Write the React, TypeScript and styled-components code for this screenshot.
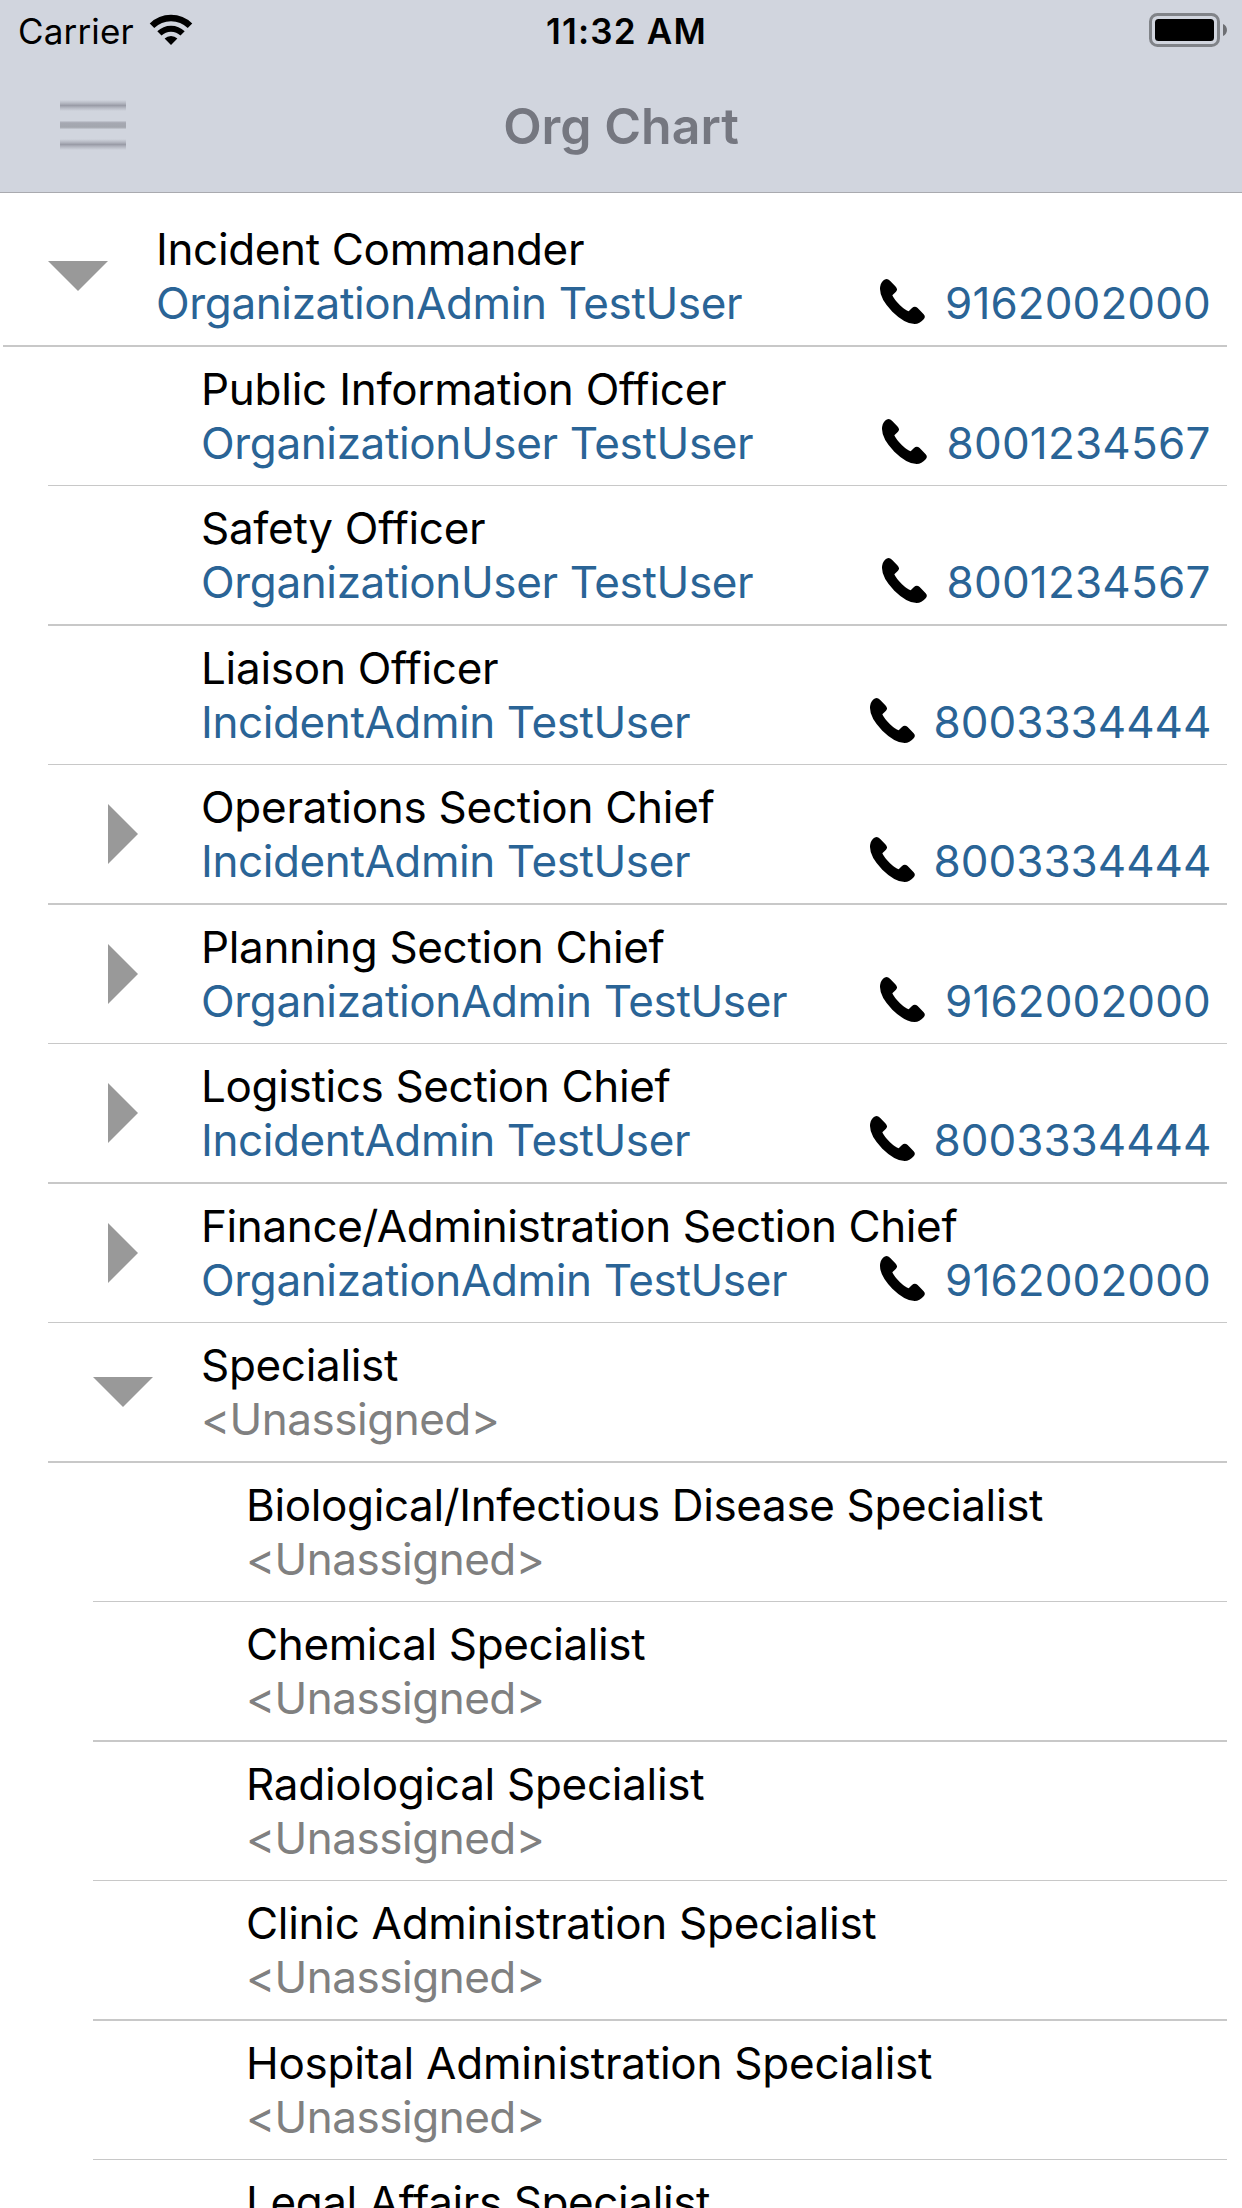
import React from 'react';
import styled, { createGlobalStyle } from 'styled-components';

const GlobalStyle = createGlobalStyle`
  *, *::before, *::after { box-sizing: border-box; }
  html, body { margin: 0; background: #fff; }
  body { overflow: hidden; }
`;

const Screen = styled.div`
  width: 1242px;
  height: 2208px;
  overflow: hidden;
  background: #fff;
  color: #000;
  font-family: Inter, 'Liberation Sans', sans-serif;
`;

const Header = styled.header`
  height: 193px;
  background: #d1d5de;
  border-bottom: 1px solid #a9aaaf;
`;

const StatusBar = styled.div`
  display: grid;
  grid-template-columns: 528px 1fr auto;
  height: 60px;
  padding: 1px 15px 0 18px;
  font-size: 35px;
  line-height: 60px;
  white-space: nowrap;
`;

const Carrier = styled.div`
  display: flex;
  gap: 15px;
  letter-spacing: 0.15px;

  svg { margin-top: 13px; }
`;

const Clock = styled.time`
  font-weight: 600;
  letter-spacing: 1.2px;
`;

const Battery = styled.svg`
  display: block;
  margin-top: 11px;
`;

const NavBar = styled.div`
  display: grid;
  grid-template-columns: 1fr auto 1fr;
  height: 132px;
  padding: 0 60px;
`;

const MenuButton = styled.button`
  display: flex;
  flex-direction: column;
  justify-self: start;
  gap: 9px;
  width: 66px;
  margin: 0;
  padding: 40px 0 0;
  border: 0;
  background: none;
`;

const MenuBar = styled.span<{ $solid?: boolean }>`
  height: 10.5px;
  background: ${(p) =>
    p.$solid
      ? 'linear-gradient(#d1d5de 5%, #a6a8b2 28%, #a3a6ae 72%, #d1d5de 95%)'
      : 'linear-gradient(#d1d5de, #b6b9c3 28%, #9a9ca7 50%, #b6b9c3 72%, #d1d5de)'};
`;

const Title = styled.h1`
  margin: 0;
  color: #757780;
  font-size: 50px;
  font-weight: 600;
  line-height: 132px;
  white-space: nowrap;
`;

const List = styled.ul`
  margin: 0;
  padding: 14px 15px 0 3px;
  list-style: none;
`;

/* Rows are 139.5px on average: every other separator is a pixel thicker. */
const Row = styled.li<{ $level: number }>`
  display: grid;
  grid-template-columns: 60px 1fr;
  column-gap: 48px;
  height: 140px;
  margin-left: ${(p) => p.$level * 45}px;
  padding-left: 45px;
  border-bottom: 2px solid #c8c8c8;

  &:nth-child(even) {
    height: 139px;
    border-bottom-width: 1px;
  }
`;

const Toggle = styled.svg`
  display: block;
  width: 60px;
  height: 60px;
  margin-top: 39px;
  fill: #999;
`;

const Details = styled.div`
  grid-column: 2;
  min-width: 0;
  padding-top: 15px;
  font-size: 44px;
  line-height: 54px;
  white-space: nowrap;
`;

const Position = styled.div<{ $track: number }>`
  letter-spacing: ${(p) => p.$track}px;
`;

const Assignment = styled.div`
  display: flex;
  justify-content: space-between;
`;

const Person = styled.a<{ $track: number }>`
  color: #2a6496;
  letter-spacing: ${(p) => p.$track}px;
`;

const Unassigned = styled.span`
  color: #808080;
  letter-spacing: -0.5px;
`;

const Phone = styled.a<{ $width: number; $gap: number; $track: number }>`
  display: flex;
  flex: none;
  gap: ${(p) => p.$gap}px;
  width: ${(p) => p.$width}px;
  color: #2a6496;
  letter-spacing: ${(p) => p.$track}px;

  svg {
    flex: none;
    margin-top: 3px;
  }
`;

type Contact = { name: string; track: number; phone: string };
type Entry = {
  title: string;
  level: number;
  track: number;
  toggle?: 'open' | 'closed';
  contact?: Contact;
};

const orgAdmin: Contact = { name: 'OrganizationAdmin TestUser', track: -0.36, phone: '9162002000' };
const orgUser: Contact = { name: 'OrganizationUser TestUser', track: -0.36, phone: '8001234567' };
const incidentAdmin: Contact = { name: 'IncidentAdmin TestUser', track: -0.4, phone: '8003334444' };

const phoneLayout: Record<string, { width: number; gap: number; track: number }> = {
  '9162002000': { width: 347.5, gap: 20.5, track: 0.1 },
  '8001234567': { width: 345, gap: 19.5, track: 0.2 },
  '8003334444': { width: 357, gap: 18.5, track: 0 },
};

const entries: Entry[] = [
  { title: 'Incident Commander', level: 0, track: -0.35, toggle: 'open', contact: orgAdmin },
  { title: 'Public Information Officer', level: 1, track: -0.25, contact: orgUser },
  { title: 'Safety Officer', level: 1, track: -0.3, contact: orgUser },
  { title: 'Liaison Officer', level: 1, track: -0.27, contact: incidentAdmin },
  { title: 'Operations Section Chief', level: 1, track: -0.27, toggle: 'closed', contact: incidentAdmin },
  { title: 'Planning Section Chief', level: 1, track: -0.34, toggle: 'closed', contact: orgAdmin },
  { title: 'Logistics Section Chief', level: 1, track: -0.35, toggle: 'closed', contact: incidentAdmin },
  { title: 'Finance/Administration Section Chief', level: 1, track: -0.39, toggle: 'closed', contact: orgAdmin },
  { title: 'Specialist', level: 1, track: -0.32, toggle: 'open' },
  { title: 'Biological/Infectious Disease Specialist', level: 2, track: -0.37 },
  { title: 'Chemical Specialist', level: 2, track: -0.39 },
  { title: 'Radiological Specialist', level: 2, track: -0.29 },
  { title: 'Clinic Administration Specialist', level: 2, track: -0.29 },
  { title: 'Hospital Administration Specialist', level: 2, track: -0.24 },
  { title: 'Legal Affairs Specialist', level: 2, track: -0.4 },
];

const WifiIcon = () => (
  <svg width="44" height="34" viewBox="0 0 44 34">
    <g fill="none" stroke="#000">
      <path d="M3 11.8A27 27 0 0 1 41 11.8" strokeWidth="6.4" />
      <path d="M10.4 19.4A16.6 16.6 0 0 1 33.6 19.4" strokeWidth="6" />
    </g>
    <path d="M22 31L15.6 24.6A9 9 0 0 1 28.4 24.6Z" />
  </svg>
);

const BatteryIcon = () => (
  <Battery width="78" height="36" viewBox="0 0 78 36">
    <rect x="1.5" y="2.5" width="68" height="31" rx="7" fill="none" stroke="#808388" strokeWidth="3" />
    <rect x="6" y="7" width="59" height="22" rx="3.5" />
    <path d="M74 12C79.3 14 79.3 22 74 24Z" fill="#6d6f74" />
  </Battery>
);

const HandsetIcon = () => (
  <svg width="45" height="45" viewBox="0 0 135 135">
    <path
      fill="#000"
      d="M9 5Q20 -5 30 5L46 22Q55 31 48 38L37 49Q42 61 60 79Q76 94 86 97L96 87Q104 79 113 87L131 106Q138 113 131 121Q119 135 104 135Q75 135 37 98Q0 60 0 30Q0 14 9 5Z"
    />
  </svg>
);

const OrgRow = ({ entry }: { entry: Entry }) => {
  const { title, level, track, toggle, contact } = entry;
  const phone = contact && phoneLayout[contact.phone];
  return (
    <Row $level={level}>
      {toggle && (
        <Toggle viewBox="0 0 60 60">
          <path d={toggle === 'open' ? 'M0 15H60L30 45Z' : 'M15 0V60L45 30Z'} />
        </Toggle>
      )}
      <Details>
        <Position $track={track}>{title}</Position>
        <Assignment>
          {contact && phone ? (
            <>
              <Person $track={contact.track}>{contact.name}</Person>
              <Phone $width={phone.width} $gap={phone.gap} $track={phone.track}>
                <HandsetIcon />
                {contact.phone}
              </Phone>
            </>
          ) : (
            <Unassigned>{'<Unassigned>'}</Unassigned>
          )}
        </Assignment>
      </Details>
    </Row>
  );
};

export default function App() {
  return (
    <Screen>
      <GlobalStyle />
      <Header>
        <StatusBar>
          <Carrier>
            Carrier
            <WifiIcon />
          </Carrier>
          <Clock>11:32 AM</Clock>
          <BatteryIcon />
        </StatusBar>
        <NavBar>
          <MenuButton aria-label="Menu">
            <MenuBar />
            <MenuBar $solid />
            <MenuBar />
          </MenuButton>
          <Title>Org Chart</Title>
        </NavBar>
      </Header>
      <List>
        {entries.map((entry) => (
          <OrgRow key={entry.title} entry={entry} />
        ))}
      </List>
    </Screen>
  );
}
